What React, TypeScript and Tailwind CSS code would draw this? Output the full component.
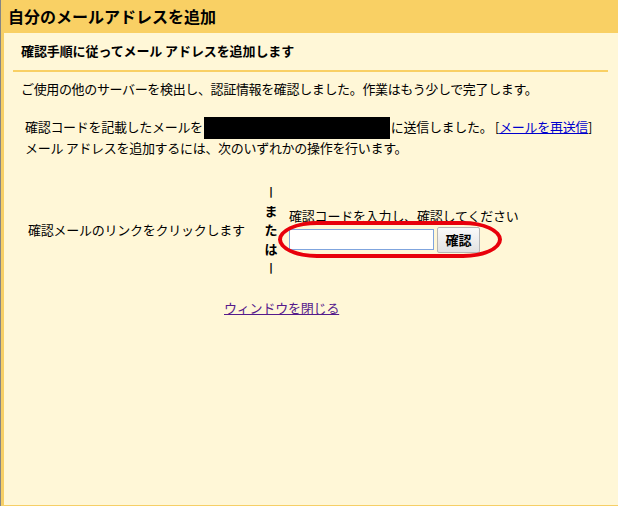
import React from "react";

export default function App() {
  const font = { fontFamily: '"Noto Sans CJK JP", "Noto Sans", sans-serif' };
  const bar = { fontFamily: '"DejaVu Sans", sans-serif' };
  return (
    <div
      className="w-[618px] h-[506px] overflow-hidden border-l border-[#858585] bg-[#f9d064] text-black"
      style={font}
    >
      <div className="flex h-full flex-col border-l-[3px] border-b border-[#f6cf66]">
        <div className="h-[33px] shrink-0 bg-[#f9d064] pl-[4px] pt-[6px] text-[16px] font-bold leading-[20px]">
          自分のメールアドレスを追加
        </div>
        <div className="flex-1 bg-[#fff7d7]">
          <div className="ml-[17px] mt-[9px] text-[13px] font-bold leading-[18px] tracking-[-0.1px]">
            確認手順に従ってメール アドレスを追加します
          </div>
          <div className="ml-[9px] mt-[10px] h-[2px] w-[595px] bg-[#f9d064]" />
          <div className="ml-[17px] mt-[8px] text-[13px] leading-[18px] tracking-[-0.35px]">
            ご使用の他のサーバーを検出し、認証情報を確認しました。作業はもう少しで完了します。
          </div>
          <div className="ml-[21px] mt-[19px] text-[13px] leading-[20px] tracking-[-0.3px]">
            <div>
              確認コードを記載したメールを
              <span className="mx-[1px] -my-[1px] inline-block h-[22px] w-[186px] bg-black align-middle" />
              に送信しました。 [
              <a href="#" className="text-[#0000cc] underline">
                メールを再送信
              </a>
              ]
            </div>
            <div>メール アドレスを追加するには、次のいずれかの操作を行います。</div>
          </div>
          <div className="mt-[24px] flex items-center">
            <div className="ml-[24px] w-[234px] text-[13px] leading-[18px] tracking-[-0.25px]">
              確認メールのリンクをクリックします
            </div>
            <div className="flex w-[18px] flex-col items-center text-[13px] font-bold leading-[19px]">
              <span className="text-[11px] text-black" style={bar}>|</span>
              <span>ま</span>
              <span>た</span>
              <span>は</span>
              <span className="text-[11px] text-black" style={bar}>|</span>
            </div>
            <div className="flex flex-col pl-[9px]">
              <div className="text-[13px] leading-[18px] tracking-[-0.2px]">
                確認コードを入力し、確認してください
              </div>
              <div className="relative mt-[2px] flex items-center">
                <input
                  type="text"
                  className="h-[21px] w-[145px] border border-[#7fa4de] bg-white outline-none"
                />
                <button className="ml-[3px] h-[26px] w-[43px] rounded-[2px] border border-[#b5b5b5] bg-gradient-to-b from-[#fafafa] to-[#e2e2e2] text-[13px] font-bold leading-[18px]">
                  確認
                </button>
                <div className="pointer-events-none absolute left-[-11px] top-[-6px] h-[37px] w-[224px] rounded-[40px/19px] border-[4px] border-[#e8000b]" />
              </div>
            </div>
          </div>
          <div className="ml-[220px] mt-[22px] text-[13px] leading-[18px] tracking-[-0.2px]">
            <a href="#" className="text-[#551a8b] underline">
              ウィンドウを閉じる
            </a>
          </div>
        </div>
      </div>
    </div>
  );
}
